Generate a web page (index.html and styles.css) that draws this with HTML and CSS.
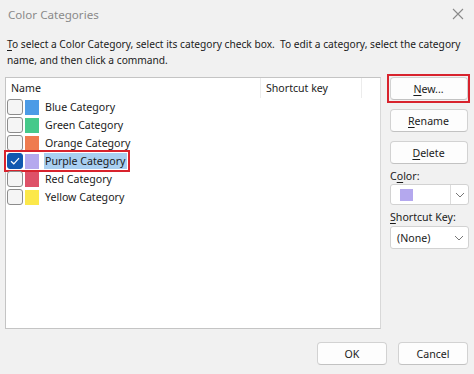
FILE: index.html
```html
<!DOCTYPE html>
<html>
<head>
<meta charset="utf-8">
<link rel="stylesheet" href="styles.css">
</head>
<body>
<div class="dialog">
  <div class="titlebar">
    <span class="title">Color Categories</span>
    <svg class="close" width="12" height="12" viewBox="0 0 12 12"><path d="M1 1 L11 11 M11 1 L1 11" stroke="#8a8a8a" stroke-width="1.1" fill="none"/></svg>
  </div>
  <div class="intro"><span class="uline">T</span>o select a Color Category, select its category check box.&nbsp; To edit a category, select the category<br>name, and then click a command.</div>
  <div class="main">
    <div class="list">
      <div class="list-head">
        <div class="col col-name">Name</div>
        <div class="col col-key">Shortcut key</div>
        <div class="col col-rest"></div>
      </div>
      <div class="rows">
        <div class="row"><span class="item"><span class="check"></span><span class="swatch sw-blue"></span><span class="label">Blue Category</span></span></div>
        <div class="row"><span class="item"><span class="check"></span><span class="swatch sw-green"></span><span class="label">Green Category</span></span></div>
        <div class="row"><span class="item"><span class="check"></span><span class="swatch sw-orange"></span><span class="label">Orange Category</span></span></div>
        <div class="row"><span class="item marked"><span class="check checked"><svg width="10" height="8" viewBox="0 0 10 8"><path d="M1 4.2 L3.8 6.8 L9 1.2" stroke="#fff" stroke-width="1.2" fill="none"/></svg></span><span class="swatch sw-purple"></span><span class="label selected">Purple Category</span></span></div>
        <div class="row"><span class="item"><span class="check"></span><span class="swatch sw-red"></span><span class="label">Red Category</span></span></div>
        <div class="row"><span class="item"><span class="check"></span><span class="swatch sw-yellow"></span><span class="label">Yellow Category</span></span></div>
      </div>
    </div>
    <div class="side">
      <div class="marked-wrap"><button class="btn"><span class="uline">N</span>ew...</button></div>
      <button class="btn"><span class="uline">R</span>ename</button>
      <button class="btn"><span class="uline">D</span>elete</button>
      <div class="field-label">C<span class="uline">o</span>lor:</div>
      <div class="combo color-combo">
        <span class="combo-value"><span class="combo-swatch"></span></span>
        <span class="combo-arrow sep"><svg width="10" height="6" viewBox="0 0 10 6"><path d="M1 1 L5 5 L9 1" stroke="#777" stroke-width="1" fill="none"/></svg></span>
      </div>
      <div class="field-label"><span class="uline">S</span>hortcut Key:</div>
      <div class="combo key-combo">
        <span class="combo-value">(None)</span>
        <span class="combo-arrow"><svg width="10" height="6" viewBox="0 0 10 6"><path d="M1 1 L5 5 L9 1" stroke="#777" stroke-width="1" fill="none"/></svg></span>
      </div>
    </div>
  </div>
  <div class="footer">
    <button class="btn foot-btn">OK</button>
    <button class="btn foot-btn">Cancel</button>
  </div>
</div>
</body>
</html>
```

FILE: styles.css
```css
* { box-sizing: border-box; }
html, body {
  margin: 0;
  padding: 0;
  background: #f0f0f0;
}
body {
  width: 474px;
  height: 374px;
  overflow: hidden;
  font-family: "Noto Sans", "Open Sans", sans-serif;
  font-size: 10.6px;
  color: #1b1b1b;
}
.dialog {
  width: 474px;
  height: 374px;
  display: flex;
  flex-direction: column;
  background: #f1f1f1;
}
.uline {
  text-decoration: underline;
  text-decoration-thickness: 1px;
  text-underline-offset: 2px;
}
.titlebar {
  height: 28px;
  display: flex;
  align-items: center;
  justify-content: space-between;
  padding: 0 10px 0 8px;
}
.title {
  font-size: 11.6px;
  color: #8a8a8a;
}
.intro {
  padding: 8px 4px 0 7px;
  font-size: 10.2px;
  line-height: 16px;
  white-space: nowrap;
}
.main {
  display: flex;
  margin-top: 6px;
  padding-left: 5px;
  gap: 6px;
}
.list {
  margin-top: 3px;
  width: 376px;
  height: 252px;
  background: #fff;
  border: 1px solid #c4c4c4;
  border-right-color: #d8d8d8;
}
.list-head {
  display: flex;
  height: 20px;
}
.col {
  line-height: 20px;
  padding-left: 5px;
}
.col-name {
  width: 255px;
  border-right: 1px solid #ececec;
}
.col-key {
  width: 101px;
  border-right: 1px solid #ececec;
}
.rows {
  display: flex;
  flex-direction: column;
}
.row {
  height: 18px;
  display: flex;
  align-items: center;
  padding-left: 1px;
}
.item {
  display: inline-flex;
  align-items: center;
  height: 16px;
}
.item.marked {
  outline: 2px solid #d8232d;
  outline-offset: 1px;
}
.check {
  width: 16px;
  height: 16px;
  border: 1px solid #8c8c8c;
  border-radius: 3px;
  background: #f5f5f5;
  display: flex;
  align-items: center;
  justify-content: center;
}
.check.checked {
  background: #1058b0;
  border-color: #1058b0;
}
.swatch {
  width: 14px;
  height: 15px;
  margin-left: 2px;
}
.sw-blue { background: #4c9be6; }
.sw-green { background: #46c98a; }
.sw-orange { background: #ef7b4e; }
.sw-purple { background: #b4a8ee; }
.sw-red { background: #de5168; }
.sw-yellow { background: #fce84a; }
.label {
  margin-left: 5px;
  padding: 0 2px 0 1px;
  line-height: 16px;
}
.label.selected {
  background: #a9cff1;
}
.side {
  width: 83px;
  display: flex;
  flex-direction: column;
  align-items: center;
}
.btn {
  font-family: inherit;
  font-size: 10.6px;
  color: #1b1b1b;
  width: 78px;
  height: 23px;
  background: #fdfdfd;
  border: 1px solid #d2d2d2;
  border-bottom-color: #c2c2c2;
  border-radius: 4px;
  padding: 0;
  margin: 0;
}
.marked-wrap {
  width: 83px;
  height: 29px;
  border: 2px solid #d8232d;
  display: flex;
  align-items: center;
  justify-content: center;
}
.side .btn { margin-top: 9px; }
.side .marked-wrap .btn { margin-top: 0; }
.side .marked-wrap + .btn { margin-top: 6px; }
.field-label {
  align-self: flex-start;
  padding-left: 3px;
  margin-top: 4px;
  line-height: 16px;
}
.combo {
  width: 79px;
  height: 21px;
  background: #fff;
  border: 1px solid #d2d2d2;
  border-radius: 3px;
  display: flex;
  align-items: stretch;
  margin-left: 2px;
}
.key-combo { height: 23px; margin-top: 1px; }
.combo-value {
  flex: 1;
  display: flex;
  align-items: center;
  padding-left: 6px;
}
.combo-swatch {
  width: 13px;
  height: 12px;
  background: #b4a8ee;
  margin-left: 3px;
}
.combo-arrow {
  width: 18px;
  display: flex;
  align-items: center;
  justify-content: center;
}
.combo-arrow.sep { border-left: 1px solid #dcdcdc; }
.footer {
  display: flex;
  justify-content: flex-end;
  gap: 11px;
  padding-right: 6px;
  margin-top: 13px;
}
.foot-btn {
  width: 70px;
  height: 23px;
}
```
